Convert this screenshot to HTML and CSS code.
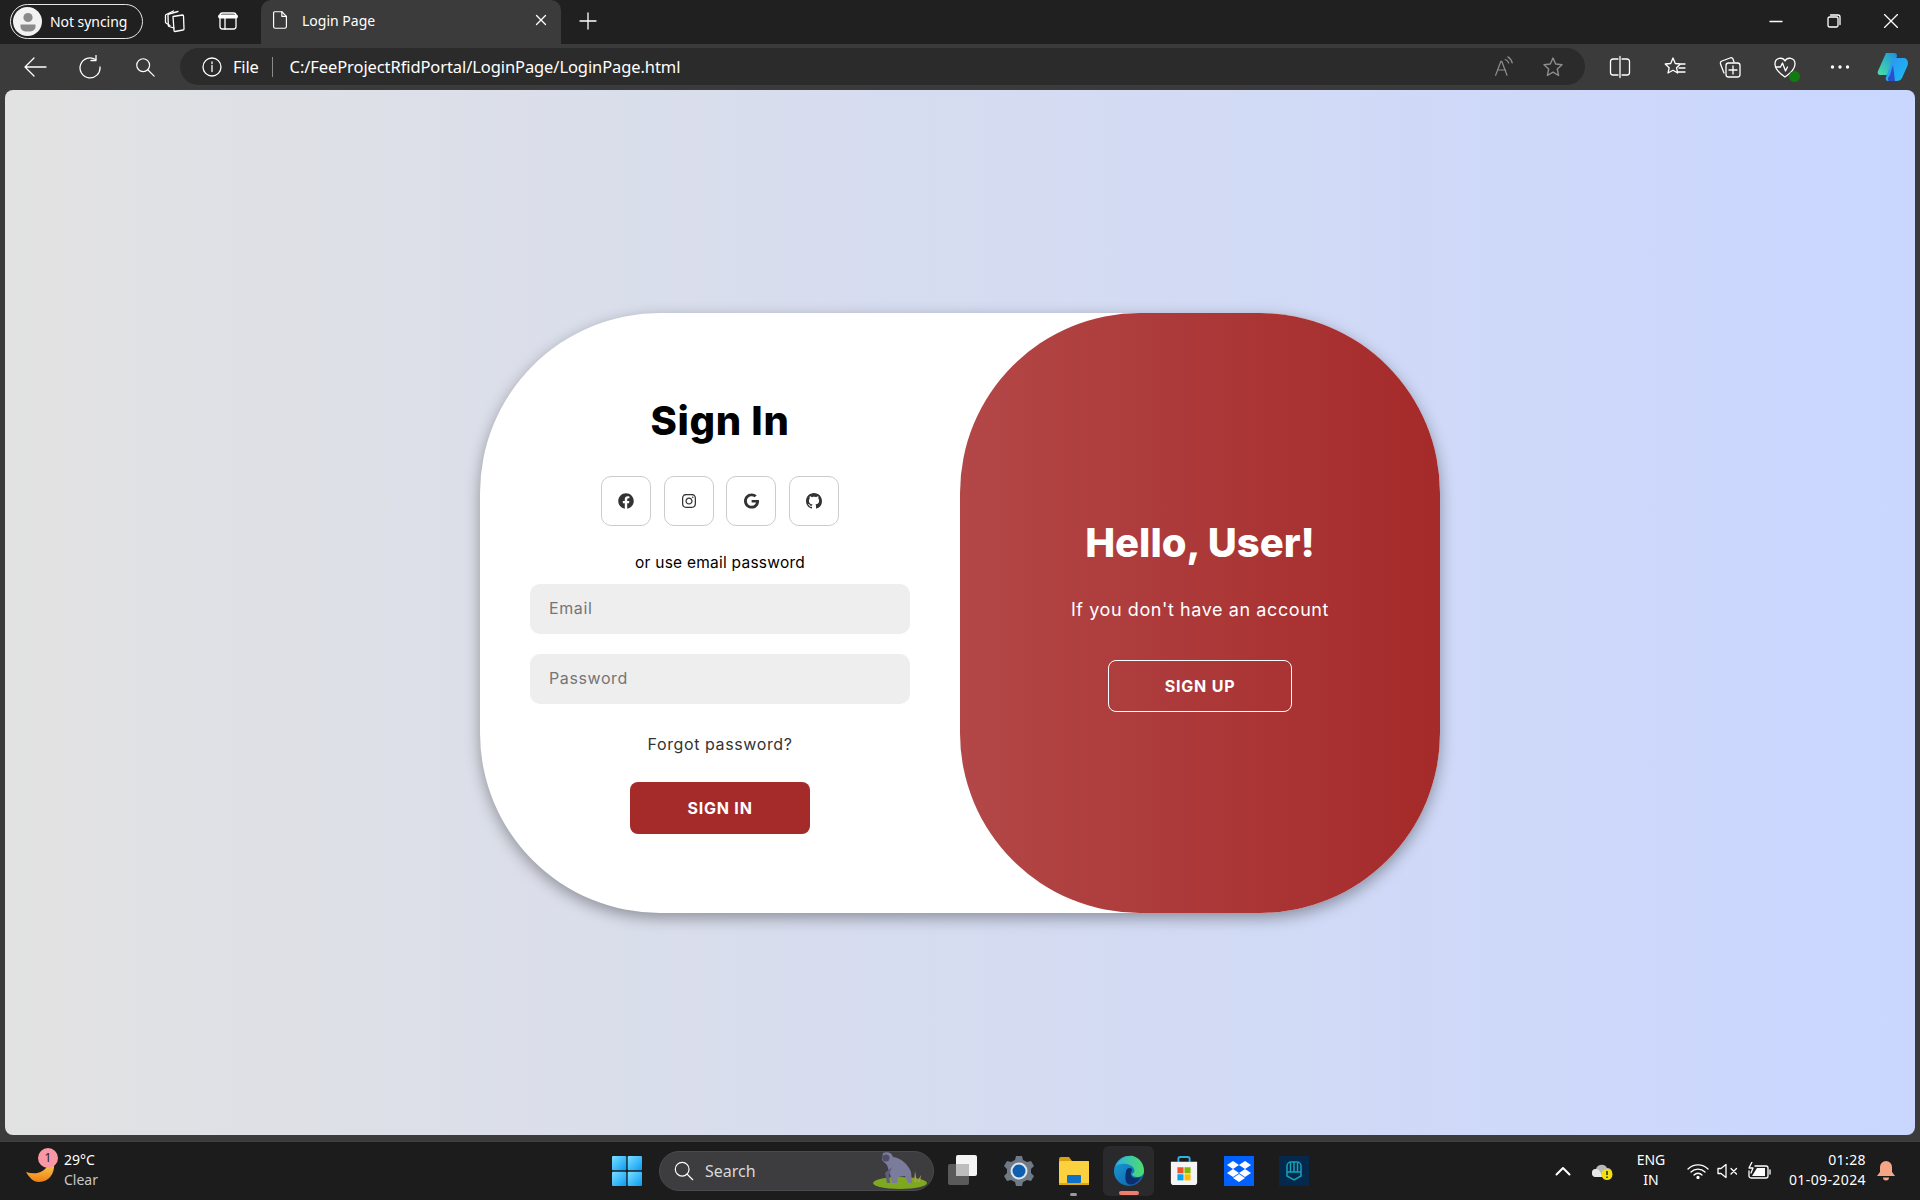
FILE: index.html
```html
<!DOCTYPE html>
<html lang="en">
<head>
<meta charset="utf-8">
<title>Login Page</title>
<link rel="stylesheet" href="styles.css">
</head>
<body>
<div class="tabstrip">
  <div class="profile">
    <span class="avatar"><svg viewBox="0 0 24 24" width="24" height="24"><circle cx="12" cy="8.500" r="4.600" fill="#8a8a8a"/><path d="M4.500 15.500h15v2a5 5 0 0 1-5 5h-5a5 5 0 0 1-5-5z" fill="#8a8a8a"/></svg></span>
    <span>Not syncing</span>
  </div>
  <span class="slot-tab slot-first"><svg viewBox="0 0 24 24" width="24" height="24" class="line"><path d="M10 7.500l9.500-1.500a1 1 0 0 1 1 1l.5 13a1 1 0 0 1-1 1l-8 1.500a1 1 0 0 1-1-1z"/><path d="M11 19l-5-1.500a1 1 0 0 1-.7-1L5 6a1 1 0 0 1 1-1l9-2.500"/><path d="M7 16.500L3 14a1 1 0 0 1-.5-1V6.500a1 1 0 0 1 .7-1l7.300-3.500"/></svg></span>
  <span class="slot-tab"><svg viewBox="0 0 24 24" width="24" height="24" class="line"><rect x="4" y="4" width="16" height="16" rx="2.500"/><path d="M4 7.500h16" stroke-width="4"/><path d="M9 9v11"/></svg></span>
  <div class="tab">
    <svg viewBox="0 0 24 24" width="22" height="24" class="line"><path d="M6 3h8l5 5v11a2 2 0 0 1-2 2H7a2 2 0 0 1-2-2V4a1 1 0 0 1 1-1z"/><path d="M14 3v5h5"/></svg>
    <span class="tab-title">Login Page</span>
    <svg viewBox="0 0 12 12" width="12" height="12" class="line"><path d="M1.500 1.500l9 9M10.500 1.500l-9 9"/></svg>
  </div>
  <span class="plus"><svg viewBox="0 0 20 20" width="20" height="20" class="line"><path d="M10 2v16M2 10h16"/></svg></span>
  <div class="winctl">
    <span class="winbtn"><svg viewBox="0 0 14 14" width="14" height="14" class="line"><path d="M1 7.500h12"/></svg></span>
    <span class="winbtn"><svg viewBox="0 0 14 14" width="14" height="14" class="line"><rect x="1" y="3" width="10" height="10" rx="1.500"/><path d="M3.500 1H11a2 2 0 0 1 2 2v7.500"/></svg></span>
    <span class="winbtn"><svg viewBox="0 0 14 14" width="14" height="14" class="line"><path d="M.5.500l13 13M13.500.500l-13 13"/></svg></span>
  </div>
</div>

<div class="toolbar">
  <span class="slot"><svg viewBox="0 0 24 24" width="24" height="24" class="line"><path d="M23 12H2M11 3l-9 9 9 9"/></svg></span>
  <span class="slot"><svg viewBox="0 0 24 24" width="24" height="24" class="line"><path d="M17.500 4.500A10 10 0 1 0 22 12"/><path d="M17 .5v5h-5" transform="translate(1 0)"/></svg></span>
  <span class="slot"><svg viewBox="0 0 24 24" width="22" height="22" class="line"><circle cx="10" cy="10" r="7"/><path d="M15 15l7 7"/></svg></span>
  <div class="address">
    <svg viewBox="0 0 20 20" width="20" height="20" class="line"><circle cx="10" cy="10" r="9"/><path d="M10 8.500v6M10 5v1.500"/></svg>
    <span class="file">File</span>
    <span class="sep"></span>
    <span class="url">C:/FeeProjectRfidPortal/LoginPage/LoginPage.html</span>
    <span class="addr-right">
      <span class="dim-slot"><svg viewBox="0 0 24 24" width="21" height="21" class="dim"><path d="M3 22l6-16h1l6 16M5.500 16h9"/><path d="M14 4a7 7 0 0 1 4 4M17 1a11 11 0 0 1 5 7"/></svg></span>
      <span class="dim-slot"><svg viewBox="0 0 24 24" width="24" height="24" class="dim"><path d="M12 3l2.700 6 6.300.7-4.700 4.300 1.300 6.500L12 17.200 6.400 20.500 7.700 14 3 9.700 9.300 9z"/></svg></span>
    </span>
  </div>
  <div class="tools">
    <span class="slot"><svg viewBox="0 0 24 24" width="24" height="24" class="line"><path d="M10 4H5a2.500 2.500 0 0 0-2.500 2.500v11A2.500 2.500 0 0 0 5 20h5M14 4h5a2.500 2.500 0 0 1 2.500 2.500v11A2.500 2.500 0 0 1 19 20h-5M12 1.500v21"/></svg></span>
    <span class="slot"><svg viewBox="0 0 24 24" width="24" height="24" class="line"><path d="M10 3l2.300 5.500 5.200.5-4 3.700 1.200 5.300-4.700-2.800L5 18l1.200-5.300-4-3.700 5.500-.5zM16 9h6M16 13h6M15 17h7"/></svg></span>
    <span class="slot"><svg viewBox="0 0 24 24" width="24" height="24" class="line"><rect x="8" y="8" width="14" height="14" rx="2.500"/><path d="M15 11v8M11 15h8"/><path d="M6 18 2.500 9A2.500 2.500 0 0 1 4 6l8-3a2 2 0 0 1 3 1l1 3"/></svg></span>
    <span class="slot health"><svg viewBox="0 0 24 24" width="24" height="24" class="line"><path d="M12 6C10 2 2 2 2 9c0 5 4 9 10 13 6-4 10-8 10-13 0-7-8-7-10-3z"/><path d="M2.500 12h5l2-4 3 8 2-4"/></svg><span class="check"></span></span>
    <span class="slot"><svg viewBox="0 0 20 4" width="20" height="4"><circle cx="2.500" cy="2" r="1.700" fill="#fff"/><circle cx="10" cy="2" r="1.700" fill="#fff"/><circle cx="17.500" cy="2" r="1.700" fill="#fff"/></svg></span>
    <span class="copilot"><svg viewBox="0 0 32 30" width="32" height="30"><defs><linearGradient id="cp1" x1="0" y1="1" x2="1" y2="0"><stop offset="0" stop-color="#4be0a0"/><stop offset="1" stop-color="#1a8fe3"/></linearGradient><linearGradient id="cp2" x1="0" y1="0" x2="1" y2="1"><stop offset="0" stop-color="#2f8ff0"/><stop offset="1" stop-color="#19c0f5"/></linearGradient></defs><path d="M9 1h8c2 0 3 1 3 3l-7 19-4 0H3c-2 0-3-2-2-4z" fill="url(#cp1)"/><path d="M16 6h11c2 0 4 2 4 5 0 2-1 4-2 6l-4 9c-1 2-3 3-5 3h-9c-2 0-3-2-2-4z" fill="url(#cp2)"/><path d="M13 23l3-10 2 16h-6c-1 0-1-2-1-3z" fill="#2b4fc9"/></svg></span>
  </div>
</div>

<main class="viewport">
  <section class="card">
    <form class="signin">
      <h1 class="title">Sign In</h1>
      <div class="socials">
        <a class="social"><svg viewBox="0 0 512 512" width="16" height="16"><path d="M504 256C504 119 393 8 256 8S8 119 8 256c0 123.780 90.690 226.380 209.250 245V327.690h-63V256h63v-54.640c0-62.150 37-96.480 93.670-96.480 27.140 0 55.520 4.840 55.520 4.840v61h-31.280c-30.800 0-40.410 19.120-40.410 38.730V256h68.780l-11 71.690h-57.780V501C413.310 482.380 504 379.780 504 256z"/></svg></a>
        <a class="social"><svg viewBox="0 0 448 512" width="14" height="16"><path d="M224.100 141c-63.600 0-114.900 51.300-114.900 114.900s51.300 114.900 114.900 114.900S339 319.500 339 255.900 287.700 141 224.100 141zm0 189.600c-41.100 0-74.700-33.500-74.700-74.700s33.500-74.700 74.700-74.700 74.700 33.500 74.700 74.700-33.600 74.700-74.700 74.700zm146.400-194.300c0 14.900-12 26.800-26.800 26.800-14.900 0-26.800-12-26.800-26.800s12-26.800 26.800-26.800 26.800 12 26.800 26.800zm76.100 27.200c-1.700-35.900-9.900-67.700-36.200-93.900-26.200-26.200-58-34.400-93.900-36.200-37-2.100-147.900-2.100-184.900 0-35.800 1.700-67.600 9.900-93.900 36.100s-34.400 58-36.200 93.900c-2.100 37-2.100 147.900 0 184.900 1.700 35.900 9.900 67.700 36.200 93.900s58 34.400 93.900 36.200c37 2.100 147.900 2.100 184.900 0 35.900-1.700 67.700-9.900 93.900-36.200 26.200-26.200 34.400-58 36.200-93.900 2.100-37 2.100-147.800 0-184.800zM398.800 388c-7.800 19.600-22.900 34.700-42.600 42.600-29.500 11.700-99.500 9-132.100 9s-102.700 2.600-132.100-9c-19.600-7.800-34.700-22.900-42.600-42.600-11.700-29.500-9-99.500-9-132.100s-2.600-102.700 9-132.100c7.800-19.600 22.900-34.700 42.600-42.600 29.500-11.700 99.500-9 132.100-9s102.700-2.600 132.100 9c19.600 7.800 34.700 22.900 42.600 42.600 11.700 29.500 9 99.500 9 132.100s2.700 102.700-9 132.100z"/></svg></a>
        <a class="social"><svg viewBox="0 0 488 512" width="15" height="16"><path d="M488 261.800C488 403.300 391.100 504 248 504 110.800 504 0 393.200 0 256S110.800 8 248 8c66.800 0 123 24.500 166.300 64.900l-67.500 64.900C258.500 52.600 94.300 116.600 94.300 256c0 86.500 69.100 156.600 153.700 156.600 98.200 0 135-70.400 140.800-106.900H248v-85.300h236.100c2.300 12.700 3.900 24.900 3.900 41.400z"/></svg></a>
        <a class="social"><svg viewBox="0 0 16 16" width="16" height="16"><path d="M8 0C3.580 0 0 3.580 0 8c0 3.540 2.290 6.530 5.470 7.590.4.070.55-.17.55-.38 0-.19-.01-.82-.01-1.490-2.010.37-2.530-.49-2.690-.94-.09-.23-.48-.94-.82-1.130-.28-.15-.68-.52-.01-.53.63-.01 1.080.58 1.230.82.72 1.210 1.870.87 2.330.66.070-.52.28-.87.51-1.070-1.780-.2-3.640-.89-3.640-3.950 0-.87.31-1.590.82-2.150-.08-.2-.36-1.020.08-2.120 0 0 .67-.21 2.200.82.64-.18 1.320-.27 2-.27.68 0 1.360.09 2 .27 1.530-1.040 2.200-.82 2.200-.82.44 1.100.16 1.920.08 2.120.51.56.82 1.270.82 2.150 0 3.070-1.870 3.750-3.650 3.950.29.25.54.73.54 1.480 0 1.070-.01 1.930-.01 2.200 0 .21.15.46.55.38A8.013 8.013 0 0016 8c0-4.420-3.580-8-8-8z"/></svg></a>
      </div>
      <p class="hint">or use email password</p>
      <input class="field field-first" type="email" placeholder="Email">
      <input class="field field-next" type="password" placeholder="Password">
      <a class="forgot">Forgot password?</a>
      <button class="btn-primary" type="button">SIGN IN</button>
    </form>
    <aside class="panel">
      <h2 class="hello">Hello, User!</h2>
      <p class="panel-text">If you don't have an account</p>
      <button class="btn-ghost" type="button">SIGN UP</button>
    </aside>
  </section>
</main>

<footer class="taskbar">
  <div class="weather">
    <span class="moon"><svg viewBox="0 0 32 32" width="32" height="32"><defs><linearGradient id="mo" x1="0" y1="0" x2="0" y2="1"><stop offset="0" stop-color="#f9c74f"/><stop offset="1" stop-color="#f07f13"/></linearGradient></defs><path d="M29 7C30 16 24 25 14 25 8 25 4 20 1 15 10 18 20 16 23 7z" fill="url(#mo)"/></svg><span class="badge">1</span></span>
    <span class="temp"><span class="temp-a">29°C</span><span class="temp-b">Clear</span></span>
  </div>
  <div class="center">
    <span class="tb start"><svg viewBox="0 0 30 30" width="30" height="30"><defs><linearGradient id="wn" x1="0" y1="0" x2="1" y2="1"><stop offset="0" stop-color="#7adfff"/><stop offset="1" stop-color="#0a9bf5"/></linearGradient></defs><rect x="0" y="0" width="14.300" height="14.300" rx="1" fill="url(#wn)"/><rect x="15.700" y="0" width="14.300" height="14.300" rx="1" fill="url(#wn)"/><rect x="0" y="15.700" width="14.300" height="14.300" rx="1" fill="url(#wn)"/><rect x="15.700" y="15.700" width="14.300" height="14.300" rx="1" fill="url(#wn)"/></svg></span>
    <div class="search">
      <svg viewBox="0 0 24 24" width="22" height="22" class="line search-ico"><circle cx="10" cy="10" r="7.500"/><path d="M15.500 15.500l6 6"/></svg>
      <span class="search-text">Search</span>
      <svg class="gorilla" viewBox="0 0 56 38" width="56" height="38"><ellipse cx="28" cy="31" rx="27" ry="6" fill="#7fa821"/><path d="M42 30l1-11 2 11 4-7-1 7z" fill="#a8a04a"/><path d="M11 1c5-2 9 0 10 4 8 1 15 7 18 15l1 11h-4l-3-7-7 1-1 6h-5l-2-9-3-9-5-5z" fill="#7b7b9c"/><circle cx="14" cy="6" r="3.500" fill="#4e4e66"/><path d="M20 15l-3 8 1 8h-3l-2-10z" fill="#5f5f7d"/></svg>
    </div>
    <span class="tb"><svg viewBox="0 0 32 32" width="32" height="32"><rect x="0" y="9" width="21" height="21" rx="2" fill="#5a5a5a"/><rect x="8" y="0" width="21" height="21" rx="2" fill="#f4f4f4"/><rect x="8" y="9" width="13" height="12" fill="#bdbdbd"/></svg></span>
    <span class="tb"><svg viewBox="0 0 32 32" width="32" height="32"><path d="M13 1h6l1 4 4 2 4-1 3 5-3 3v4l3 3-3 5-4-1-4 2-1 4h-6l-1-4-4-2-4 1-3-5 3-3v-4L1 11l3-5 4 1 4-2z" fill="#6e7a85"/><circle cx="16" cy="16" r="8.500" fill="#dfe5ea"/><circle cx="16" cy="16" r="6.500" fill="#0f5fb0"/></svg></span>
    <span class="tb"><svg viewBox="0 0 32 30" width="32" height="30"><path d="M1 3a2 2 0 0 1 2-2h8l3 4h17v6H1z" fill="#d9a011"/><rect x="1" y="5" width="30" height="24" rx="1.500" fill="#fbd13f"/><rect x="9" y="19" width="14" height="8" rx="1" fill="#0f72c8"/><rect x="1" y="27" width="30" height="2" fill="#e0a90f"/></svg><span class="dot-open"></span></span>
    <span class="tb tb-active"><svg viewBox="0 0 32 32" width="32" height="32"><defs><linearGradient id="ed1" x1="0" y1="0" x2="1" y2="1"><stop offset="0" stop-color="#1ba0d8"/><stop offset="1" stop-color="#0c59a4"/></linearGradient><linearGradient id="ed2" x1="0" y1="0" x2="1" y2="0"><stop offset="0" stop-color="#2db5e0"/><stop offset="1" stop-color="#4fdc6a"/></linearGradient></defs><circle cx="16" cy="16" r="15" fill="url(#ed1)"/><path d="M3 11C6 3 14 0 20 1c7 2 11 8 11 15 0 4-3 6-7 6-3 0-5-1-5-3 2-1 3-3 2-5-2-5-13-7-18-3z" fill="url(#ed2)"/><path d="M13 17c0-4 4-5 6-3 0 3-2 4-1 6 1 4 7 3 10 2-3 6-9 9-13 7-3-2-3-8-2-12z" fill="#0b2e6f"/></svg><span class="bar-open"></span></span>
    <span class="tb"><svg viewBox="0 0 32 32" width="30" height="32"><path d="M10 6V3a2 2 0 0 1 2-2h8a2 2 0 0 1 2 2v3" fill="none" stroke="#2cb3e8" stroke-width="2"/><path d="M2 6h28v22a3 3 0 0 1-3 3H5a3 3 0 0 1-3-3z" fill="#f5f5f5"/><rect x="9" y="12" width="6.500" height="6.500" fill="#f1512e"/><rect x="16.500" y="12" width="6.500" height="6.500" fill="#7fba00"/><rect x="9" y="19.500" width="6.500" height="6.500" fill="#00a4ef"/><rect x="16.500" y="19.500" width="6.500" height="6.500" fill="#ffb900"/></svg></span>
    <span class="tb"><svg viewBox="0 0 30 30" width="30" height="30"><rect width="30" height="30" fill="#0061fe"/><path d="M9 5l6 4-6 4-6-4zM21 5l6 4-6 4-6-4zM9 13l6 4-6 4-6-4zM21 13l6 4-6 4-6-4zM15 18l6 4-6 4-6-4z" fill="#fff"/></svg></span>
    <span class="tb"><svg viewBox="0 0 30 30" width="30" height="30"><rect width="30" height="30" fill="#05294d"/><path d="M8 10a4 4 0 0 1 4-4h6a4 4 0 0 1 4 4v10l-7 4-7-4zM15 6v10M8 16h14M11.500 7v9M18.500 7v9" fill="none" stroke="#14a3b8" stroke-width="1.500"/></svg></span>
  </div>
  <div class="tray">
    <span class="tray-i up"><svg viewBox="0 0 16 10" width="16" height="10" class="line thick"><path d="M1.500 8.500L8 2l6.500 6.500"/></svg></span>
    <span class="tray-i cloud"><svg viewBox="0 0 22 18" width="22" height="18"><path d="M5 15a4 4 0 0 1 0-8 6 6 0 0 1 11-1 4 4 0 0 1 1 9z" fill="#b9b9b9"/><path d="M5 15a4 4 0 0 1 0-8c3 0 5 3 6 8z" fill="#e8e8e8"/><circle cx="16" cy="12.500" r="5.500" fill="#f4e00b"/><path d="M16 9v4M16 14.500v1.500" stroke="#222" stroke-width="1.500"/></svg></span>
    <span class="lang"><span>ENG</span><span>IN</span></span>
    <span class="tray-i wifi"><svg viewBox="0 0 22 16" width="22" height="16" class="line"><path d="M1 6a14 14 0 0 1 20 0M4 9a10 10 0 0 1 14 0M7 12a5.500 5.500 0 0 1 8 0"/><circle cx="11" cy="14.500" r="1" fill="#fff"/></svg></span>
    <span class="tray-i vol"><svg viewBox="0 0 22 16" width="22" height="16" class="line"><path d="M1 5.500h3l5-4v13l-5-4H1zM14 5.500l5.500 5.500M19.500 5.500L14 11"/></svg></span>
    <span class="tray-i batt"><svg viewBox="0 0 24 18" width="24" height="18" class="line"><path d="M8 4h11a2 2 0 0 1 2 2v8a2 2 0 0 1-2 2H4a2 2 0 0 1-2-2V9"/><path d="M23 8v4"/><path d="M5 14l5-8h8v8z" fill="#fff" stroke="none"/><path d="M5 0L2 6h4l-2 5"/></svg></span>
    <span class="clock"><span>01:28</span><span>01-09-2024</span></span>
    <span class="bell"><svg viewBox="0 0 18 20" width="18" height="20"><path d="M9 0a6 6 0 0 1 6 6v5l3 4H0l3-4V6a6 6 0 0 1 6-6z" fill="#f6a585"/><path d="M6 16.500a3 3 0 0 0 6 0z" fill="#f6a585"/></svg></span>
  </div>
</footer>
</body>
</html>
```
FILE: styles.css
```css
* { box-sizing: border-box; }
html, body { height: 100%; }
body {
  margin: 0;
  height: 1200px;
  display: flex;
  flex-direction: column;
  background: #3b3b3b;
  font-family: "Noto Sans", "Open Sans", sans-serif;
  color: #fff;
  overflow: hidden;
}
svg { display: block; flex: none; }
.line { fill: none; stroke: #fff; stroke-width: 1.300; stroke-linecap: round; stroke-linejoin: round; }
.line.thick { stroke-width: 2; }
.dim { fill: none; stroke: #8d8d8d; stroke-width: 1.400; stroke-linejoin: round; stroke-linecap: round; }

.tabstrip { height: 44px; flex: none; background: #202020; display: flex; align-items: center; padding: 0 0 2px 10px; }
.profile { width: 133px; height: 35px; border: 1.500px solid #e8e8e8; border-radius: 18px; display: flex; align-items: center; gap: 8px; padding-left: 2px; font-size: 14px; letter-spacing: -.05px; }
.avatar { width: 29px; height: 29px; border-radius: 50%; background: #f2f2f2; display: flex; align-items: center; justify-content: center; }
.slot-tab { width: 53px; display: flex; justify-content: center; }
.slot-first { margin-left: 5px; }
.tab { align-self: flex-start; width: 300px; height: 44px; margin-left: 7px; margin-bottom: -2px; background: #3b3b3b; border-radius: 10px 10px 0 0; display: flex; align-items: center; padding: 0 14px 4px 8px; gap: 11px; font-size: 14px; }
.tab-title { flex: 1; }
.plus { margin-left: 17px; }
.winctl { margin-left: auto; display: flex; }
.winbtn { width: 57.500px; display: flex; justify-content: center; }

.toolbar { height: 46px; flex: none; background: #3b3b3b; display: flex; align-items: center; padding: 0 0 1px 7px; }
.slot { width: 55px; height: 37px; display: flex; align-items: center; justify-content: center; position: relative; }
.address { width: 1405px; height: 37px; margin-left: 8px; background: #2b2b2b; border-radius: 19px; display: flex; align-items: center; padding-left: 22px; font-size: 16.500px; }
.file { margin-left: 11px; letter-spacing: -.2px; }
.sep { width: 1px; height: 20px; background: #8a8a8a; margin: 0 17px 0 13px; }
.url { letter-spacing: -.09px; }
.addr-right { margin-left: auto; display: flex; padding-right: 7px; }
.dim-slot { width: 50px; display: flex; justify-content: center; align-items: center; }
.tools { display: flex; align-items: center; margin-left: 7px; }
.check { position: absolute; right: 12px; bottom: 3px; width: 11px; height: 11px; border-radius: 50%; background: #107c10; }
.copilot { margin-left: 10px; }

.viewport { flex: none; height: 1045px; margin: 0 5px; border-radius: 8px; background: linear-gradient(to right, #e2e2e2, #c9d6ff); display: flex; align-items: center; justify-content: center; font-family: Inter, "Noto Sans", sans-serif; }
.card { width: 960px; height: 600px; background: #fff; border-radius: 180px; box-shadow: 0 5px 15px rgba(0,0,0,.35); display: grid; grid-template-columns: 480px 480px; color: #000; }
.signin { display: flex; flex-direction: column; align-items: center; padding-top: 78px; }
.title { margin: 0; font-size: 40px; line-height: 60px; font-weight: 800; letter-spacing: .7px; }
.socials { display: flex; gap: 12.500px; margin-top: 25px; }
.social { width: 50px; height: 50px; border: 1px solid #ccc; border-radius: 10px; display: flex; align-items: center; justify-content: center; }
.social svg { fill: #333; }
.hint { margin: 26px 0 0; font-size: 15.500px; line-height: 22px; letter-spacing: .24px; }
.field { width: 380px; height: 50px; border: 0; border-radius: 10px; background: #eee; padding: 0 19px 2px; font: 16px Inter, sans-serif; letter-spacing: .6px; outline: none; }
.field::placeholder { color: #757575; }
.field-first { margin-top: 10px; }
.field-next { margin-top: 20px; }
.forgot { margin-top: 29px; font-size: 16px; line-height: 22px; letter-spacing: .6px; color: #333; }
.btn-primary { margin-top: 27px; width: 180px; height: 52px; padding: 0; background: #a52a2a; color: #fff; border: 1px solid transparent; border-radius: 8px; font: 700 16px Inter, sans-serif; letter-spacing: .8px; }
.panel { border-radius: 180px; background: linear-gradient(to right, #b34747, #a52a2a); color: #fff; display: flex; flex-direction: column; align-items: center; padding-top: 200px; }
.hello { margin: 0; font-size: 40px; line-height: 60px; font-weight: 800; }
.panel-text { margin: 24px 0 0; font-size: 18px; line-height: 26px; letter-spacing: .58px; }
.btn-ghost { margin-top: 37px; width: 184px; height: 52px; padding: 0; background: transparent; color: #fff; border: 1px solid #fff; border-radius: 8px; font: 700 16px Inter, sans-serif; letter-spacing: .8px; }

.taskbar { margin-top: 6px; height: 59px; flex: none; background: #1c1c1c; border-top: 1px solid #404040; display: flex; align-items: center; padding-left: 25px; }
.weather { display: flex; align-items: center; width: 587px; gap: 7px; }
.moon { position: relative; width: 32px; height: 32px; margin-top: 4px; }
.badge { position: absolute; top: -9px; left: 13px; width: 20px; height: 20px; border-radius: 50%; background: #fb97a4; color: #222; font-size: 12px; line-height: 20px; text-align: center; }
.temp { display: flex; flex-direction: column; font-size: 14px; line-height: 20px; margin-top: -2px; }
.temp-b { color: #c8c8c8; }
.center { display: flex; align-items: center; }
.tb { width: 55px; height: 50px; display: flex; align-items: center; justify-content: center; position: relative; }
.start { width: 30px; margin-right: 17px; }
.search { width: 275px; height: 40px; margin-right: 2px; border-radius: 20px; background: #3d3d40; border: 1px solid #4a4a4c; display: flex; align-items: center; padding-left: 13px; gap: 10px; font-size: 16px; color: #d8d8d8; position: relative; }
.gorilla { position: absolute; right: 5px; top: 0; }
.tb-active { width: 51px; margin: 0 2px; background: #2a2a2c; border-radius: 6px; }
.dot-open { position: absolute; bottom: 0; left: 24px; width: 7px; height: 3px; border-radius: 2px; background: #9a9a9a; }
.bar-open { position: absolute; bottom: 1px; left: 15.500px; width: 20px; height: 4px; border-radius: 2px; background: #f07d6e; }
.tray { margin-left: auto; display: flex; align-items: center; }
.tray-i { display: flex; justify-content: center; }
.up { width: 16px; }
.cloud { width: 22px; margin-left: 20px; }
.lang { width: 40px; margin-left: 18px; display: flex; flex-direction: column; align-items: center; font-size: 14px; line-height: 20px; margin-top: -2px; }
.wifi { width: 22px; margin-left: 16px; }
.vol { width: 22px; margin-left: 8px; }
.batt { width: 24px; margin-left: 8px; }
.clock { width: 80px; margin-left: 15px; margin-top: -2px; display: flex; flex-direction: column; align-items: flex-end; font-size: 14px; line-height: 20px; letter-spacing: .4px; white-space: nowrap; }
.bell { margin-left: 11px; margin-right: 25px; }
```
